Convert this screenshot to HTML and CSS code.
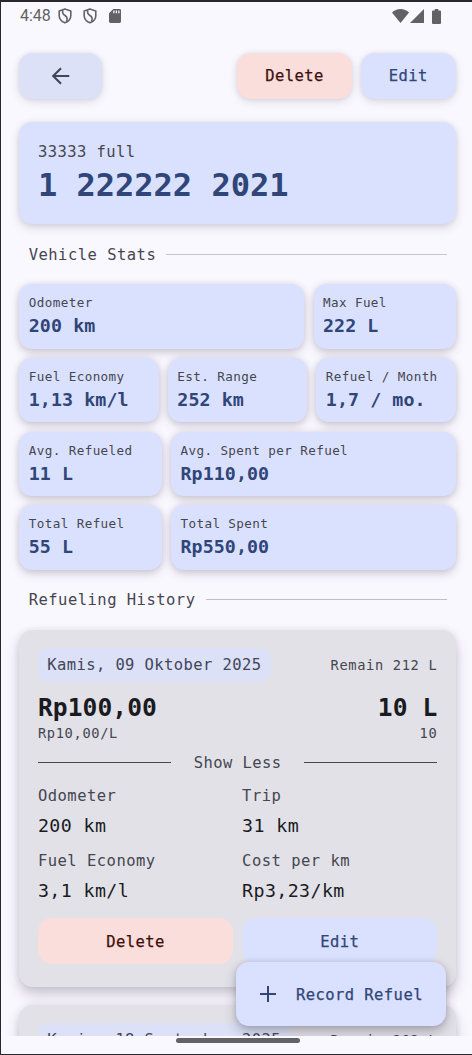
FILE: index.html
```html
<!DOCTYPE html>
<html lang="en">
<head>
<meta charset="utf-8">
<title>Vehicle details</title>
<link rel="stylesheet" href="styles.css">
</head>
<body>
<div class="screen">
  <header class="status">
    <span class="clock">4:48</span>
    <svg class="shield" viewBox="0 0 14 16"><path d="M7 1 1.200 3v4.700c0 3.200 2.400 5.700 5.800 7.100 3.400-1.400 5.800-3.900 5.800-7.100V3z"/><path d="M4.800 2.200C4 5 5 6.300 7 7.500S9.800 10.500 8.500 13.500"/></svg>
    <svg class="shield second" viewBox="0 0 14 16"><path d="M7 1 1.200 3v4.700c0 3.200 2.400 5.700 5.800 7.100 3.400-1.400 5.800-3.900 5.800-7.100V3z"/><path d="M4.800 2.200C4 5 5 6.300 7 7.500S9.800 10.500 8.500 13.500"/></svg>
    <svg class="sd" viewBox="0 0 12 14"><path fill-rule="evenodd" d="M4.300 0H10.600Q12 0 12 1.400V12.600Q12 14 10.600 14H1.400Q0 14 0 12.600V4.300zM4.200 1.500V4.300H5.500V1.500zM6.700 1.500V4.300H8V1.500zM9.200 1.500V4.300H10.500V1.500z"/></svg>
    <span class="fill"></span>
    <svg class="wifi" viewBox="0 0 17 14"><path d="M8.500 14 0 3.600Q3.500 0 8.500 0T17 3.600z"/></svg>
    <svg class="signal" viewBox="0 0 14 14"><path d="M14 0V14H0z"/></svg>
    <svg class="battery" viewBox="0 0 9 15"><path d="M2.700 0H6.300V1.500H8Q9 1.500 9 2.500V14Q9 15 8 15H1Q0 15 0 14V2.500Q0 1.500 1 1.500H2.700z"/></svg>
  </header>

  <main class="content">
    <nav class="actions">
      <div class="btn back"><svg viewBox="0 0 24 24"><path d="M21 12H4M12 3.500 3.500 12l8.500 8.500"/></svg></div>
      <span class="fill"></span>
      <div class="btn danger">Delete</div>
      <div class="btn primary edit">Edit</div>
    </nav>

    <section class="vehicle">
      <div class="subtitle">33333 full</div>
      <h1 class="title">1 222222 2021</h1>
    </section>

    <div class="section"><span>Vehicle Stats</span><i></i></div>

    <section class="stats">
      <div class="row two-one">
        <div class="tile"><div class="label">Odometer</div><div class="value">200 km</div></div>
        <div class="tile"><div class="label">Max Fuel</div><div class="value">222 L</div></div>
      </div>
      <div class="row thirds">
        <div class="tile"><div class="label">Fuel Economy</div><div class="value">1,13 km/l</div></div>
        <div class="tile"><div class="label">Est. Range</div><div class="value">252 km</div></div>
        <div class="tile"><div class="label">Refuel / Month</div><div class="value">1,7 / mo.</div></div>
      </div>
      <div class="row one-two">
        <div class="tile"><div class="label">Avg. Refueled</div><div class="value">11 L</div></div>
        <div class="tile"><div class="label">Avg. Spent per Refuel</div><div class="value">Rp110,00</div></div>
      </div>
      <div class="row one-two">
        <div class="tile"><div class="label">Total Refuel</div><div class="value">55 L</div></div>
        <div class="tile"><div class="label">Total Spent</div><div class="value">Rp550,00</div></div>
      </div>
    </section>

    <div class="section history"><span>Refueling History</span><i></i></div>

    <section class="entries">
      <article class="entry">
        <div class="line"><span class="chip">Kamis, 09 Oktober 2025</span><span class="small">Remain 212 L</span></div>
        <div class="line amount"><span>Rp100,00</span><span>10 L</span></div>
        <div class="line small"><span>Rp10,00/L</span><span>10</span></div>
        <div class="toggle"><i></i><span>Show Less</span><i></i></div>
        <div class="details">
          <div class="key">Odometer</div><div class="key">Trip</div>
          <div class="val">200 km</div><div class="val">31 km</div>
          <div class="key">Fuel Economy</div><div class="key">Cost per km</div>
          <div class="val">3,1 km/l</div><div class="val">Rp3,23/km</div>
        </div>
        <div class="entry-actions"><div class="btn flat danger">Delete</div><div class="btn flat primary">Edit</div></div>
      </article>
      <article class="entry">
        <div class="line"><span class="chip">Kamis, 18 September 2025</span><span class="small">Remain 202 L</span></div>
      </article>
    </section>

    <div class="fab"><svg viewBox="0 0 16 16"><path d="M8 0V16M0 8H16"/></svg><span>Record Refuel</span></div>
  </main>

  <footer class="gesture"><span></span></footer>
</div>
</body>
</html>
```

FILE: styles.css
```css
* { box-sizing: border-box; }
body { margin: 0; background: #faf8ff; }
.screen {
  width: 472px; height: 1055px;
  display: flex; flex-direction: column;
  border-top: 2px solid #2a282d; border-left: 1px solid #2a282d; border-bottom: 1px solid #2a282d;
  background: #faf8ff; color: #45464f; overflow: hidden;
  font: 15.5px/22px "DejaVu Sans Mono", monospace; letter-spacing: .43px;
  white-space: nowrap;
}
.fill { flex: 1; }

.status { height: 28px; flex: none; display: flex; align-items: center; padding: 0 31px 0 19px; color: #626264; }
.clock { font: 16px/20px Roboto, sans-serif; letter-spacing: 0; width: 37.500px; }
.status svg { flex: none; fill: #626264; }
.status .shield { width: 14px; height: 16px; fill: none; stroke: #626264; stroke-width: 1.6; }
.status .second { margin-left: 11px; }
.sd { width: 12px; height: 14px; margin-left: 12px; }
.wifi { width: 17px; height: 14px; }
.signal { width: 14px; height: 14px; margin-left: 1.500px; }
.battery { width: 9px; height: 15px; margin-left: 8px; }

.content { position: relative; height: 1006px; flex: none; overflow: hidden; padding: 22.500px 16.200px 0 18.400px; }
.actions { display: flex; gap: 9px; height: 46.700px; }
.btn {
  display: flex; align-items: center; justify-content: center;
  height: 46.700px; border-radius: 14px;
  box-shadow: 0 3px 9px rgba(70,60,80,.16), 0 0 4px rgba(70,60,80,.09);
  -webkit-text-stroke: .25px currentColor;
}
.back { width: 82.500px; background: #dce1f7; }
.back svg { width: 22px; height: 22px; fill: none; stroke: #424659; stroke-width: 2.300; }
.danger { background: #f9dedb; color: #410e0b; }
.primary { background: #dae1ff; color: #304578; }
.danger, .primary { padding-top: 1.200px; }
.actions .danger { width: 114.500px; }
.edit { width: 95px; }

.vehicle {
  margin-top: 22.600px; height: 102.400px; padding: 19.300px 18.500px 0; border-radius: 13px; background: #dae1ff;
  box-shadow: 0 4px 10px rgba(70,60,80,.18), 0 0 5px rgba(70,60,80,.1);
}
.title { margin: 2.700px 0 0; font-size: 32.100px; line-height: 38px; letter-spacing: -.03px; color: #304578; }

.section { display: flex; align-items: center; gap: 10px; margin: 19px 9.300px 0; height: 22px; letter-spacing: .48px; }
.section i { flex: 1; height: 1px; background: #c5c5d0; }
.section span, .toggle span { padding-top: 2px; }

.stats { margin-top: 18.800px; display: grid; gap: 9.200px; }
.row { display: grid; gap: 9.200px; }
.two-one { grid-template-columns: 285px 1fr; }
.thirds { grid-template-columns: repeat(3, minmax(0, 1fr)); }
.one-two { grid-template-columns: 142.500px 1fr; }
.tile {
  height: 64.600px; padding: 10px 9.400px 0; border-radius: 13px; background: #dae1ff;
  box-shadow: 0 4px 10px rgba(70,60,80,.22), 0 0 6px rgba(70,60,80,.12);
}
.label { font-size: 12.600px; line-height: 18px; letter-spacing: .4px; }
.value { font-size: 18.300px; line-height: 27px; letter-spacing: .08px; font-weight: bold; color: #304578; }

.history { margin-top: 18.500px; }
.history i { background: #bfbfc5; }
.entries { margin-top: 19.200px; display: grid; gap: 17.500px; }
.entry {
  padding: 18.500px; padding-bottom: 23px; border-radius: 14px; background: #e2e1e8;
  box-shadow: 0 8px 14px rgba(60,50,70,.24), 0 0 7px rgba(60,50,70,.1);
}
.line { display: flex; justify-content: space-between; align-items: center; }
.chip { height: 33.500px; padding: 1px 9.300px 0; line-height: 33.500px; border-radius: 10px; background: #dce1f7; color: #424659; letter-spacing: .41px; }
.small { font-size: 13.700px; line-height: 18px; letter-spacing: .66px; }
.amount { margin-top: 10.300px; color: #1a1b21; font-weight: bold; font-size: 24.600px; line-height: 32px; letter-spacing: .07px; }
.toggle { display: flex; align-items: center; gap: 22.500px; margin-top: 9.200px; height: 22px; }
.toggle i { flex: 1; height: 1px; background: #45464f; }
.details { display: grid; grid-template-columns: 1fr 1fr; column-gap: 9px; grid-template-rows: 30px 30px 35px 30px; line-height: 30px; margin-top: 8px; }
.val { color: #1a1b21; font-size: 18.300px; letter-spacing: .4px; }
.key { letter-spacing: .48px; }
.key:nth-child(n+5) { line-height: 40px; }
.entry-actions { display: grid; grid-template-columns: 1fr 1fr; gap: 9px; margin-top: 11.500px; }
.flat { box-shadow: none; }

.fab {
  position: absolute; right: 26px; bottom: 10px; width: 210px; height: 64px;
  display: flex; align-items: center; padding-left: 24px; gap: 20px;
  border-radius: 13px; background: #dae1ff; color: #304578;
  box-shadow: 0 6px 12px rgba(50,45,60,.3), 0 0 5px rgba(50,45,60,.16);
  -webkit-text-stroke: .25px currentColor;
}
.fab svg { width: 16px; height: 16px; stroke: #304578; stroke-width: 2; }
.fab span { padding-top: 1px; }

.gesture { flex: 1; display: flex; justify-content: center; padding: 2px 0 0 2px; }
.gesture span { width: 124px; height: 5px; border-radius: 3px; background: #636365; }
```
